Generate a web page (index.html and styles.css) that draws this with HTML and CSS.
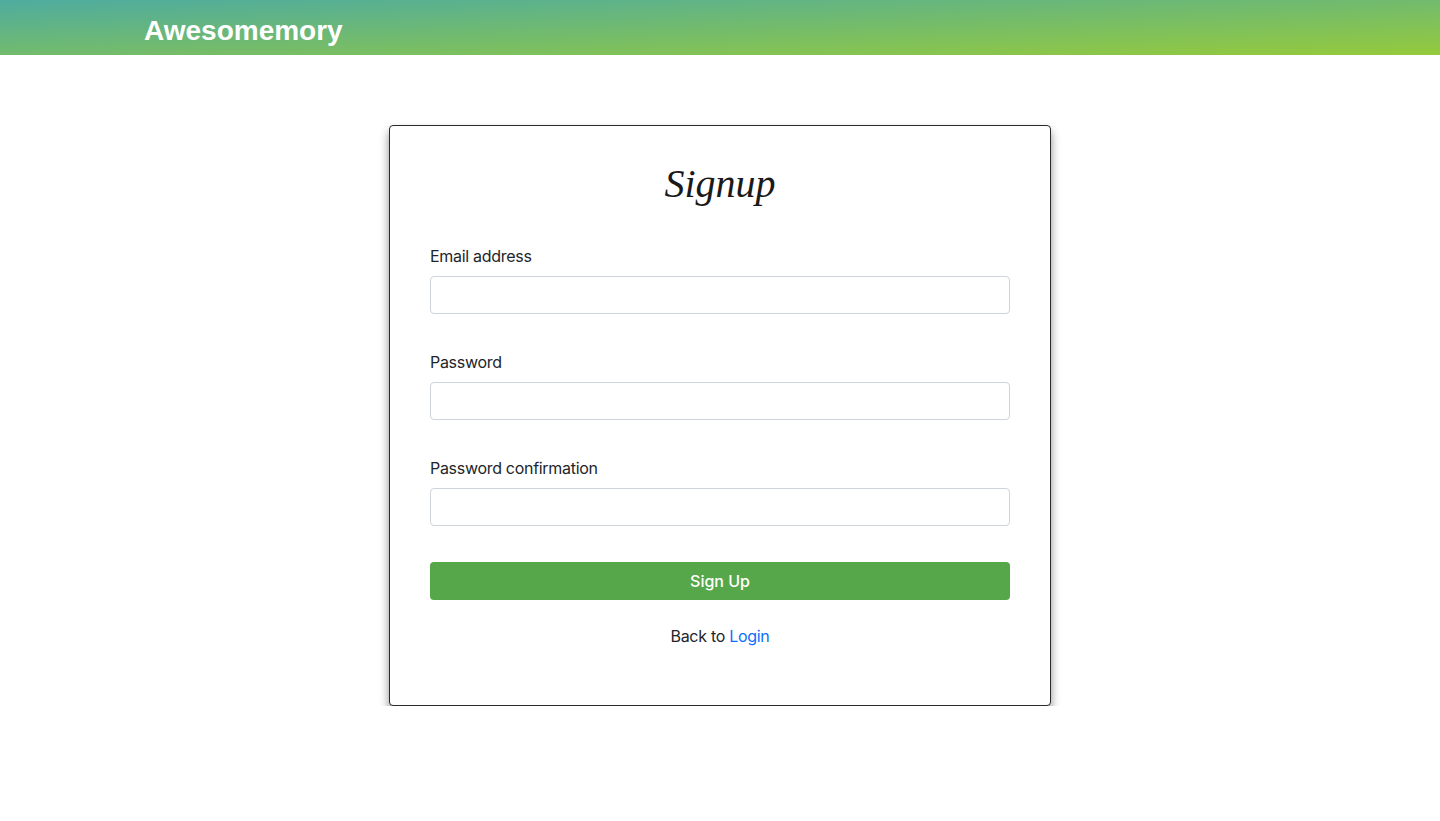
FILE: index.html
```html
<!DOCTYPE html>
<html lang="en">
<head>
<meta charset="utf-8">
<title>Awesomemory - Signup</title>
<link rel="stylesheet" href="styles.css">
</head>
<body>
<header class="navbar">
  <a class="brand" href="#">Awesomemory</a>
</header>
<main class="page">
  <section class="card">
    <h1 class="card-title">Signup</h1>
    <form class="form">
      <div class="form-group">
        <label class="label" for="email">Email address</label>
        <input class="input" id="email" type="email">
      </div>
      <div class="form-group">
        <label class="label" for="password">Password</label>
        <input class="input" id="password" type="password">
      </div>
      <div class="form-group">
        <label class="label" for="password2">Password confirmation</label>
        <input class="input" id="password2" type="password">
      </div>
      <button class="btn" type="button">Sign Up</button>
    </form>
    <p class="back">Back to <a class="link" href="#">Login</a></p>
  </section>
</main>
</body>
</html>
```
FILE: styles.css
```css
* { box-sizing: border-box; }
html, body { margin: 0; padding: 0; }
body {
  font-family: Inter, "Liberation Sans", Arial, sans-serif;
  font-size: 16px;
  line-height: 1.5;
  letter-spacing: -0.3px;
  color: #212529;
  background: #fff;
}
.navbar {
  height: 55px;
  display: flex;
  align-items: center;
  padding-left: 144px;
  background: linear-gradient(to bottom right, #4fac9f, #95ca3c);
}
.brand {
  color: #fff;
  text-decoration: none;
  font-family: "Liberation Sans", Arial, sans-serif;
  font-weight: bold;
  font-size: 28px;
  line-height: 1;
  letter-spacing: 0;
  margin-top: 6px;
}
.page {
  display: flex;
  justify-content: center;
  padding-top: 70px;
}
.card {
  width: 662px;
  border: 1px solid #2b2b2b;
  border-radius: 4px;
  padding: 28px 40px 57px;
  box-shadow: 0 6px 10px rgba(0,0,0,0.45);
  background: #fff;
}
.card-title {
  margin: 0 0 30px;
  text-align: center;
  font-family: "Liberation Serif", "DejaVu Serif", serif;
  font-style: italic;
  font-weight: normal;
  font-size: 40px;
  line-height: 60px;
  letter-spacing: 0;
  color: #1a1a1a;
}
.form { display: flex; flex-direction: column; }
.form-group {
  display: flex;
  flex-direction: column;
  margin-bottom: 36px;
}
.label {
  line-height: 24px;
  margin-bottom: 8px;
}
.input {
  height: 38px;
  border: 1px solid #ced4da;
  border-radius: 4px;
  padding: 6px 12px;
  font: inherit;
}
.btn {
  height: 38px;
  border: none;
  border-radius: 4px;
  background: #56a74a;
  color: #fff;
  font: inherit;
  font-weight: 500;
  cursor: pointer;
}
.back {
  margin: 24px 0 0;
  text-align: center;
}
.link { color: #0d6efd; text-decoration: none; }
```
